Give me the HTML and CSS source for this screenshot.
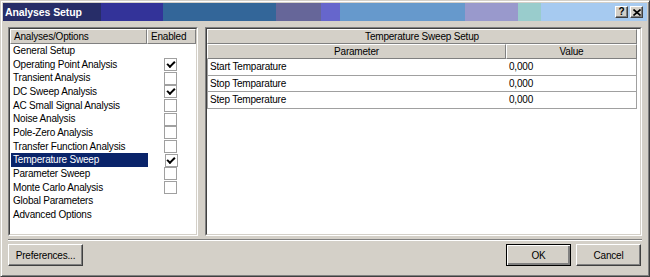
FILE: index.html
```html
<!DOCTYPE html>
<html lang="en">
<head>
  <meta charset="UTF-8">
  <title>Analyses Setup</title>
  <link rel="stylesheet" href="styles.css">
</head>
<body>

<div class="dialog">
  <!-- title bar -->
  <div class="titlebar">
    <span class="title">Analyses Setup</span>
    <span class="cap-btn">?</span>
    <span class="cap-btn cap-close">
      <svg width="8" height="7" viewBox="0 0 8 7"><path d="M0.5 0.5 L7.5 6.5 M7.5 0.5 L0.5 6.5" stroke="#000" stroke-width="1.6"/></svg>
    </span>
  </div>

  <div class="content">
    <div class="panes">
      <!-- analyses list -->
      <div class="tree-panel">
        <div class="tree-inner">
          <div class="list-head">
            <span class="col-name">Analyses/Options</span>
            <span class="col-enabled">Enabled</span>
          </div>
          <ul class="list">
            <li><span class="name">General Setup</span></li>
            <li><span class="name">Operating Point Analysis</span><span class="chk"><span class="box on"></span></span></li>
            <li><span class="name">Transient Analysis</span><span class="chk"><span class="box"></span></span></li>
            <li><span class="name">DC Sweep Analysis</span><span class="chk"><span class="box on"></span></span></li>
            <li><span class="name">AC Small Signal Analysis</span><span class="chk"><span class="box"></span></span></li>
            <li><span class="name">Noise Analysis</span><span class="chk"><span class="box"></span></span></li>
            <li><span class="name">Pole-Zero Analysis</span><span class="chk"><span class="box"></span></span></li>
            <li><span class="name">Transfer Function Analysis</span><span class="chk"><span class="box"></span></span></li>
            <li class="selected"><span class="name">Temperature Sweep</span><span class="chk"><span class="box on"></span></span></li>
            <li><span class="name">Parameter Sweep</span><span class="chk"><span class="box"></span></span></li>
            <li><span class="name">Monte Carlo Analysis</span><span class="chk"><span class="box"></span></span></li>
            <li><span class="name">Global Parameters</span></li>
            <li><span class="name">Advanced Options</span></li>
          </ul>
        </div>
      </div>

      <!-- setup grid -->
      <div class="setup-panel">
        <div class="setup-inner">
          <div class="setup-title">Temperature Sweep Setup</div>
          <div class="grid-head">
            <span class="col-param">Parameter</span>
            <span class="col-value">Value</span>
          </div>
          <div class="grid-row"><span class="col-param">Start Temparature</span><span class="col-value">0,000</span></div>
          <div class="grid-row"><span class="col-param">Stop Temparature</span><span class="col-value">0,000</span></div>
          <div class="grid-row"><span class="col-param">Step Temperature</span><span class="col-value">0,000</span></div>
        </div>
      </div>
    </div>

    <div class="separator"></div>

    <div class="footer">
      <button class="btn btn-prefs">Preferences...</button>
      <span class="spacer"></span>
      <button class="btn btn-default">OK</button>
      <button class="btn">Cancel</button>
    </div>
  </div>
</div>

</body>
</html>
```

FILE: styles.css
```css
* { box-sizing: border-box; }
body {
  margin: 0;
  width: 650px;
  height: 277px;
  overflow: hidden;
  background: #d4d0c8;
  font-family: "Liberation Sans", Arial, sans-serif;
  font-size: 10px;
  letter-spacing: -0.2px;
  color: #000;
}

/* window frame */
.dialog {
  height: 277px;
  border: 1px solid;
  border-color: #d4d0c8 #404040 #404040 #d4d0c8;
  box-shadow: inset 1px 1px #fff, inset -1px -1px #808080;
  padding: 2px;
  display: flex;
  flex-direction: column;
}

/* title bar with banded gradient */
.titlebar {
  height: 18px;
  display: flex;
  align-items: center;
  gap: 2px;
  padding: 0 4px 0 2px;
  background: linear-gradient(to right,
    #272d68 0, #272d68 98px,
    #333399 98px, #333399 160px,
    #336699 160px, #336699 273px,
    #666699 273px, #666699 318px,
    #6666cc 318px, #6666cc 337px,
    #6699cc 337px, #6699cc 462px,
    #9999cc 462px, #9999cc 515px,
    #99cccc 515px, #99cccc 538px,
    #a6caf0 538px, #a6caf0 100%);
}
.title {
  flex: 1;
  color: #fff;
  font-weight: bold;
  font-size: 10.5px;
  letter-spacing: -0.1px;
}
.cap-btn {
  width: 13px;
  height: 12px;
  background: #d4d0c8;
  border: 1px solid;
  border-color: #fff #404040 #404040 #fff;
  box-shadow: inset -1px -1px #808080;
  display: flex;
  align-items: center;
  justify-content: center;
  font-weight: bold;
  font-size: 10px;
  line-height: 1;
}

.content {
  flex: 1;
  padding: 6px 5px 0 5px;
  display: flex;
  flex-direction: column;
}
.panes {
  display: flex;
  gap: 7px;
  height: 209px;
}

/* left list */
.tree-panel {
  width: 190px;
  border: 1px solid;
  border-color: #808080 #fff #fff #808080;
}
.tree-inner {
  height: 100%;
  background: #fff;
  border: 1px solid;
  border-color: #404040 #d4d0c8 #d4d0c8 #404040;
}
.list-head {
  display: flex;
  height: 15px;
}
.list-head span {
  background: #d4d0c8;
  border: 1px solid;
  border-color: #fff #808080 #808080 #fff;
  padding-left: 3px;
  line-height: 13px;
}
.col-name { width: 137px; }
.col-enabled { flex: 1; }
.list {
  list-style: none;
  margin: 0;
  padding: 0;
}
.list li {
  display: flex;
  align-items: center;
  height: 13.67px;
}
.list .name {
  width: 137px;
  padding-left: 3px;
  line-height: 13.67px;
}
.list .selected .name {
  background: #0a246a;
  color: #fff;
  margin-left: 1px;
  padding-left: 2px;
}
.chk {
  flex: 1;
  display: flex;
  justify-content: center;
  padding-right: 2px;
}
.box {
  width: 13px;
  height: 13px;
  border: 1px solid #a0a0a0;
  background: #fff;
  display: flex;
  align-items: center;
  justify-content: center;
}
.box.on::after {
  content: "";
  width: 6px;
  height: 3px;
  border-left: 2px solid #000;
  border-bottom: 2px solid #000;
  transform: rotate(-45deg);
  margin-top: -2px;
}

/* right grid */
.setup-panel {
  flex: 1;
  border: 1px solid;
  border-color: #808080 #fff #fff #808080;
}
.setup-inner {
  height: 100%;
  background: #fff;
  border: 1px solid;
  border-color: #404040 #d4d0c8 #d4d0c8 #404040;
  padding-right: 3px;
}
.setup-title {
  height: 15px;
  background: #d4d0c8;
  border: 1px solid;
  border-color: #fff #808080 #808080 #fff;
  text-align: center;
  line-height: 13px;
}
.grid-head {
  display: flex;
  height: 15px;
}
.grid-head span {
  background: #d4d0c8;
  border: 1px solid;
  border-color: #fff #808080 #808080 #fff;
  text-align: center;
  line-height: 13px;
}
.col-param { width: 299px; }
.col-value { flex: 1; }
.grid-row {
  display: flex;
  height: 16.5px;
  border-bottom: 1px solid #a0a0a0;
  border-left: 1px solid #a0a0a0;
  border-right: 1px solid #a0a0a0;
  line-height: 15.5px;
}
.grid-row .col-param { padding-left: 2px; width: 298px; }
.grid-row .col-value { padding-left: 3px; }

/* bottom */
.separator {
  margin-top: 3px;
  height: 2px;
  border-top: 1px solid #808080;
  border-bottom: 1px solid #fff;
}
.footer {
  display: flex;
  gap: 5px;
  margin-top: 3px;
  padding-right: 1px;
}
.spacer { flex: 1; }
.btn {
  height: 22px;
  width: 65px;
  padding: 0;
  background: #d4d0c8;
  font-family: "Liberation Sans", Arial, sans-serif;
  font-size: 10px;
  letter-spacing: -0.2px;
  color: #000;
  border: 1px solid;
  border-color: #fff #404040 #404040 #fff;
  box-shadow: inset -1px -1px #808080;
}
.btn-prefs { width: 75px; }
.btn-default {
  border: 1px solid #000;
  box-shadow: inset 1px 1px #fff, inset -2px -2px #808080;
}
```
